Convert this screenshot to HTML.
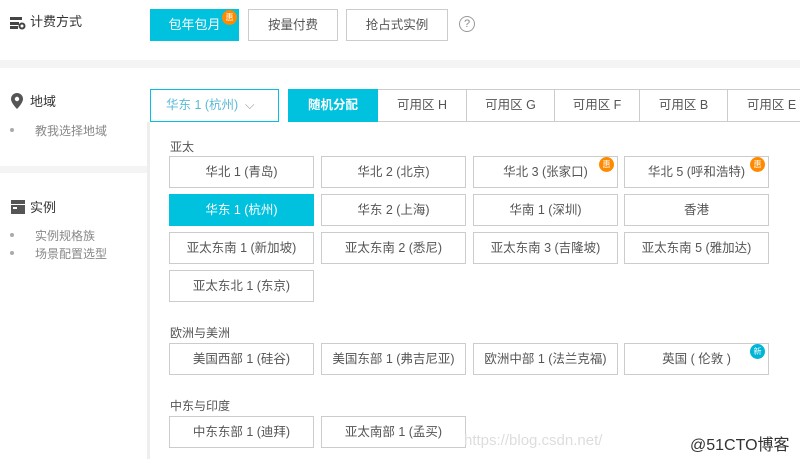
<!DOCTYPE html>
<html><head><meta charset="utf-8"><style>
*{margin:0;padding:0;box-sizing:border-box}
body{width:800px;height:459px;overflow:hidden;background:#fff;font-family:"Liberation Sans","Noto Sans CJK SC",sans-serif;font-size:12px;color:#333;position:relative}
.a{position:absolute}
.btn{position:absolute;border:1px solid #ccc;background:#fff;text-align:center;line-height:30px;font-size:12.5px;color:#555}
.sel{background:#00c1de;border-color:#00c1de;color:#fff}
.badge{position:absolute;width:15px;height:15px;border-radius:50%;background:#ff8a00;color:#fff;font-size:8px;line-height:15px;text-align:center}
.lab{position:absolute;font-size:12px;color:#555}
.li{position:absolute;font-size:12px;color:#888}
.dot{position:absolute;width:4px;height:4px;border-radius:50%;background:#aaa}
.tab{position:absolute;top:89px;height:33px;border:1px solid #ccc;border-left:none;line-height:31px;text-align:center;color:#555;font-size:12.5px}
.h{position:absolute;font-size:13px;color:#333}
</style></head><body>
<svg class="a" style="left:10px;top:16px" width="16" height="14" viewBox="0 0 16 14"><rect x="0" y="1" width="12" height="3" fill="#444"/><rect x="0" y="6" width="9" height="3" fill="#444"/><rect x="0" y="10" width="8" height="3" fill="#444"/><circle cx="12" cy="10" r="3.5" fill="#444"/><circle cx="12" cy="10" r="1.5" fill="#fff"/></svg>
<div class="h" style="left:30px;top:11px">计费方式</div>
<div class="btn sel" style="left:150px;top:9px;width:89px;height:32px;font-size:13px">包年包月</div>
<div class="badge" style="left:222px;top:10px">惠</div>
<div class="btn" style="left:248px;top:9px;width:90px;height:32px">按量付费</div>
<div class="btn" style="left:346px;top:9px;width:102px;height:32px">抢占式实例</div>
<div class="a" style="left:459px;top:16px;width:16px;height:16px;border:1px solid #999;border-radius:50%;text-align:center;line-height:14px;font-size:11px;color:#888">?</div>
<div class="a" style="left:0;top:60px;width:800px;height:8px;background:#f4f4f4"></div>
<svg class="a" style="left:11px;top:93px" width="12" height="16" viewBox="0 0 12 16"><path d="M6 0C2.7 0 0 2.6 0 6c0 4 6 10 6 10s6-6 6-10c0-3.4-2.7-6-6-6z" fill="#555"/><circle cx="6" cy="6" r="2.2" fill="#fff"/></svg>
<div class="h" style="left:30px;top:91px">地域</div>
<div class="dot" style="left:10px;top:128px"></div><div class="li" style="left:35px;top:122px">教我选择地域</div>
<div class="a" style="left:0;top:166px;width:148px;height:7px;background:#f4f4f4"></div>
<svg class="a" style="left:11px;top:200px" width="14" height="14" viewBox="0 0 14 14"><rect x="0" y="0" width="14" height="4" fill="#555"/><rect x="0" y="5" width="14" height="9" fill="#555"/><rect x="2" y="7" width="4" height="2" fill="#fff"/></svg>
<div class="h" style="left:30px;top:197px">实例</div>
<div class="dot" style="left:10px;top:233px"></div><div class="li" style="left:35px;top:227px">实例规格族</div>
<div class="dot" style="left:10px;top:251px"></div><div class="li" style="left:35px;top:245px">场景配置选型</div>
<div class="a" style="left:150px;top:89px;width:129px;height:33px;border:1px solid #00c1de;color:#5bb9d6;line-height:31px;padding-left:15px;font-size:12.5px">华东 1 (杭州)<span style="position:absolute;left:94px;color:#999">⌵</span></div>
<div class="tab sel" style="left:288px;width:90px;border:1px solid #00c1de;font-weight:bold;color:#fff">随机分配</div>
<div class="tab" style="left:378px;width:89px">可用区 H</div>
<div class="tab" style="left:467px;width:88px">可用区 G</div>
<div class="tab" style="left:555px;width:85px">可用区 F</div>
<div class="tab" style="left:640px;width:88px">可用区 B</div>
<div class="tab" style="left:728px;width:88px">可用区 E</div>
<div class="a" style="left:147px;top:122px;width:3px;height:337px;background:#eee"></div>
<div class="lab" style="left:170px;top:138px">亚太</div>
<div class="btn" style="left:169px;top:156px;width:145px;height:32px">华北 1 (青岛)</div>
<div class="btn" style="left:321px;top:156px;width:145px;height:32px">华北 2 (北京)</div>
<div class="btn" style="left:473px;top:156px;width:145px;height:32px">华北 3 (张家口)</div><div class="badge" style="left:599px;top:157px">惠</div>
<div class="btn" style="left:624px;top:156px;width:145px;height:32px">华北 5 (呼和浩特)</div><div class="badge" style="left:750px;top:157px">惠</div>
<div class="btn sel" style="left:169px;top:194px;width:145px;height:32px">华东 1 (杭州)</div>
<div class="btn" style="left:321px;top:194px;width:145px;height:32px">华东 2 (上海)</div>
<div class="btn" style="left:473px;top:194px;width:145px;height:32px">华南 1 (深圳)</div>
<div class="btn" style="left:624px;top:194px;width:145px;height:32px">香港</div>
<div class="btn" style="left:169px;top:232px;width:145px;height:32px">亚太东南 1 (新加坡)</div>
<div class="btn" style="left:321px;top:232px;width:145px;height:32px">亚太东南 2 (悉尼)</div>
<div class="btn" style="left:473px;top:232px;width:145px;height:32px">亚太东南 3 (吉隆坡)</div>
<div class="btn" style="left:624px;top:232px;width:145px;height:32px">亚太东南 5 (雅加达)</div>
<div class="btn" style="left:169px;top:270px;width:145px;height:32px">亚太东北 1 (东京)</div>
<div class="lab" style="left:170px;top:324px">欧洲与美洲</div>
<div class="btn" style="left:169px;top:343px;width:145px;height:32px">美国西部 1 (硅谷)</div>
<div class="btn" style="left:321px;top:343px;width:145px;height:32px">美国东部 1 (弗吉尼亚)</div>
<div class="btn" style="left:473px;top:343px;width:145px;height:32px">欧洲中部 1 (法兰克福)</div>
<div class="btn" style="left:624px;top:343px;width:145px;height:32px">英国 ( 伦敦 )</div><div class="badge" style="left:750px;top:344px;background:#00b5d6">新</div>
<div class="lab" style="left:170px;top:397px">中东与印度</div>
<div class="btn" style="left:169px;top:416px;width:145px;height:32px">中东东部 1 (迪拜)</div>
<div class="btn" style="left:321px;top:416px;width:145px;height:32px">亚太南部 1 (孟买)</div>
<div class="a" style="left:464px;top:432px;font-size:15px;color:#ddd">https://blog.csdn.net/</div>
<div class="a" style="left:690px;top:431px;font-size:16px;color:#333">@51CTO博客</div>
</body></html>
